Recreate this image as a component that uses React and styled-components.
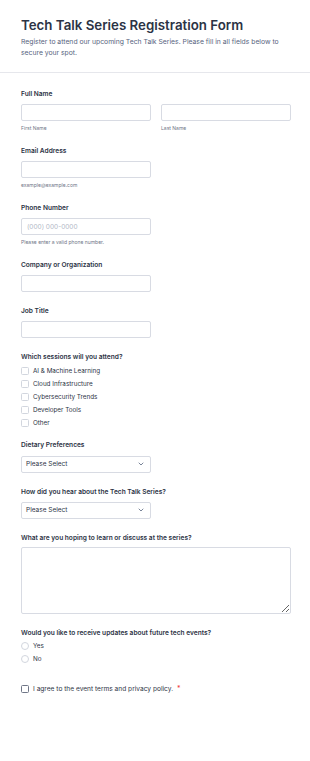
import React from "react";
import styled, { createGlobalStyle } from "styled-components";

const GlobalStyle = createGlobalStyle`
  body {
    margin: 0;
    background: #ffffff;
    font-family: Inter, "Liberation Sans", sans-serif;
    color: #2c3345;
  }
  * { box-sizing: border-box; }
`;

const sessions = [
  "AI & Machine Learning",
  "Cloud Infrastructure",
  "Cybersecurity Trends",
  "Developer Tools",
  "Other",
];

function Chevron() {
  return (
    <svg width="6" height="4" viewBox="0 0 6 4" fill="none">
      <path d="M1 1l2 2 2-2" stroke="#57647e" strokeWidth="0.8" strokeLinecap="round" strokeLinejoin="round" />
    </svg>
  );
}

export default function App() {
  return (
    <>
      <GlobalStyle />
      <Page>
        <Header>
          <Title>Tech Talk Series Registration Form</Title>
          <Subtitle>
            Register to attend our upcoming Tech Talk Series. Please fill in all fields below to
            secure your spot.
          </Subtitle>
        </Header>

        <Form>
          <Field>
            <Label>Full Name</Label>
            <NameRow>
              <div>
                <TextInput />
                <Sublabel>First Name</Sublabel>
              </div>
              <div>
                <TextInput />
                <Sublabel>Last Name</Sublabel>
              </div>
            </NameRow>
          </Field>

          <Field>
            <Label>Email Address</Label>
            <TextInput $half />
            <Sublabel>example@example.com</Sublabel>
          </Field>

          <Field>
            <Label>Phone Number</Label>
            <TextInput $half placeholder="(000) 000-0000" />
            <Sublabel>Please enter a valid phone number.</Sublabel>
          </Field>

          <Field>
            <Label>Company or Organization</Label>
            <TextInput $half />
          </Field>

          <Field>
            <Label>Job Title</Label>
            <TextInput $half />
          </Field>

          <Field $gap={12}>
            <Label>Which sessions will you attend?</Label>
            <OptionList>
              {sessions.map((s) => (
                <Option key={s}>
                  <Box />
                  <OptionText>{s}</OptionText>
                </Option>
              ))}
            </OptionList>
          </Field>

          <Field>
            <Label $mb={6}>Dietary Preferences</Label>
            <Select>
              <span>Please Select</span>
              <Chevron />
            </Select>
          </Field>

          <Field>
            <Label>How did you hear about the Tech Talk Series?</Label>
            <Select>
              <span>Please Select</span>
              <Chevron />
            </Select>
          </Field>

          <Field>
            <Label $mb={4}>What are you hoping to learn or discuss at the series?</Label>
            <TextArea />
          </Field>

          <Field $gap={22}>
            <Label $mb={4}>Would you like to receive updates about future tech events?</Label>
            <OptionList>
              <Option>
                <Radio />
                <OptionText>Yes</OptionText>
              </Option>
              <Option>
                <Radio />
                <OptionText>No</OptionText>
              </Option>
            </OptionList>
          </Field>

          <Agree>
            <Box $dark />
            <AgreeText>I agree to the event terms and privacy policy.</AgreeText>
            <Required>*</Required>
          </Agree>
        </Form>
      </Page>
    </>
  );
}

const Page = styled.div`
  width: 310px;
  min-height: 761px;
  background: #ffffff;
`;

const Header = styled.header`
  padding: 17px 21px 14px;
  border-bottom: 1px solid #e6e7ec;
`;

const Title = styled.h1`
  margin: 0 0 2px;
  font-size: 13.3px;
  line-height: 17px;
  font-weight: 600;
  color: #2c3345;
`;

const Subtitle = styled.p`
  margin: 0;
  font-size: 6.8px;
  line-height: 11px;
  color: #57647e;
`;

const Form = styled.div`
  padding: 16px 19px 40px 21px;
  display: flex;
  flex-direction: column;
`;

const Field = styled.div`
  display: flex;
  flex-direction: column;
  margin-bottom: ${(p) => p.$gap ?? 14}px;
`;

const Label = styled.label`
  font-size: 6.6px;
  line-height: 10px;
  font-weight: 600;
  color: #2c3345;
  margin-bottom: ${(p) => p.$mb ?? 5}px;
`;

const NameRow = styled.div`
  display: grid;
  grid-template-columns: 130px 130px;
  gap: 10px;
`;

const TextInput = styled.input`
  display: block;
  width: ${(p) => (p.$half ? "130px" : "100%")};
  height: 17px;
  border: 1px solid #d8dbe3;
  border-radius: 2px;
  padding: 0 5px;
  font-family: inherit;
  font-size: 6.5px;
  color: #2c3345;
  background: #ffffff;
  &::placeholder {
    color: #b2b8c6;
  }
`;

const Sublabel = styled.div`
  margin-top: 3px;
  font-size: 5px;
  line-height: 8px;
  color: #6f7687;
`;

const OptionList = styled.div`
  display: flex;
  flex-direction: column;
  gap: 4.3px;
`;

const Option = styled.div`
  display: flex;
  align-items: center;
  gap: 4px;
  height: 8.7px;
`;

const Box = styled.span`
  width: 8px;
  height: 8px;
  flex: 0 0 8px;
  border: ${(p) => (p.$dark ? "1px solid #6f7687" : "1px solid #d2d6de")};
  border-radius: 1.5px;
  background: #ffffff;
`;

const Radio = styled(Box)`
  border-radius: 50%;
`;

const OptionText = styled.span`
  font-size: 6.3px;
  color: #2c3345;
`;

const Select = styled.div`
  width: 130px;
  height: 17px;
  border: 1px solid #d8dbe3;
  border-radius: 2px;
  padding: 0 6px 0 4px;
  display: flex;
  align-items: center;
  justify-content: space-between;
  font-size: 6.5px;
  color: #2c3345;
`;

const TextArea = styled.textarea`
  display: block;
  width: 100%;
  height: 67px;
  border: 1px solid #d8dbe3;
  border-radius: 2px;
  font-family: inherit;
  resize: vertical;
`;

const Agree = styled.div`
  display: flex;
  align-items: center;
  gap: 4px;
`;

const AgreeText = styled.span`
  font-size: 6.6px;
  color: #2c3345;
`;

const Required = styled.span`
  font-size: 7px;
  color: #f23a3c;
  margin-left: 0;
  align-self: flex-start;
  line-height: 8px;
`;
